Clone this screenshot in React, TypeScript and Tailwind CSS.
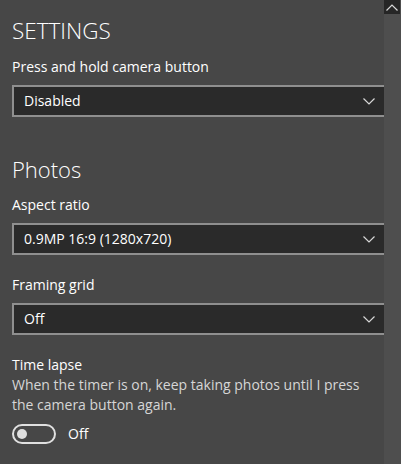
import { useState } from "react";

const font = { fontFamily: '"Open Sans", "Noto Sans", sans-serif' };

function Chevron({ up = false }: { up?: boolean }) {
  return (
    <svg width="12" height="7" viewBox="0 0 12 7" className={up ? "rotate-180" : ""}>
      <path d="M0.5 0.5 L6 6 L11.5 0.5" fill="none" stroke="#d8d8d8" strokeWidth="1.2" />
    </svg>
  );
}

function Dropdown({ value }: { value: string }) {
  return (
    <div className="flex h-[32px] w-[376px] items-center justify-between border-2 border-[#8f8f8f] bg-[#2a2a2a] pl-[10px] pr-[11px]">
      <span className="text-[14px] leading-[20px] text-white">{value}</span>
      <Chevron />
    </div>
  );
}

function Label({ children, className = "" }: { children: React.ReactNode; className?: string }) {
  return <p className={`text-[14px] leading-[20px] text-white ${className}`}>{children}</p>;
}

export default function App() {
  const [timeLapse, setTimeLapse] = useState(false);

  return (
    <div className="flex h-[464px] w-[401px] bg-[#474747]" style={font}>
      <div className="w-[384px] overflow-hidden pl-[12px]">
        <h1 className="mt-[15px] text-[22.5px] font-light leading-[32px] text-white">SETTINGS</h1>
        <Label className="mt-[10px]">Press and hold camera button</Label>
        <div className="mt-[8px]">
          <Dropdown value="Disabled" />
        </div>

        <h2 className="mt-[36px] text-[22px] font-light leading-[32px] text-white">Photos</h2>
        <Label className="mt-[10px]">Aspect ratio</Label>
        <div className="mt-[8px]">
          <Dropdown value="0.9MP 16:9 (1280x720)" />
        </div>

        <Label className="mt-[20px]">Framing grid</Label>
        <div className="mt-[8px]">
          <Dropdown value="Off" />
        </div>

        <Label className="mt-[20px]">Time lapse</Label>
        <p className="w-[360px] text-[14px] leading-[20px] text-[#d6d6d6]">
          When the timer is on, keep taking photos until I press the camera button again.
        </p>
        <div className="mt-[9px] flex items-center gap-[12px]">
          <button
            onClick={() => setTimeLapse((v) => !v)}
            className={`flex h-[20px] w-[44px] items-center rounded-full border-2 border-[#e0e0e0] px-[3px] ${
              timeLapse ? "justify-end" : "justify-start"
            }`}
          >
            <span className="block h-[10px] w-[10px] rounded-full bg-[#e0e0e0]" />
          </button>
          <span className="text-[14px] leading-[20px] text-white">{timeLapse ? "On" : "Off"}</span>
        </div>
      </div>

      <div className="flex w-[17px] flex-col bg-[#4e4e4e]">
        <div className="flex h-[14px] w-[16px] items-center justify-center bg-[#262626]">
          <Chevron up />
        </div>
      </div>
    </div>
  );
}
